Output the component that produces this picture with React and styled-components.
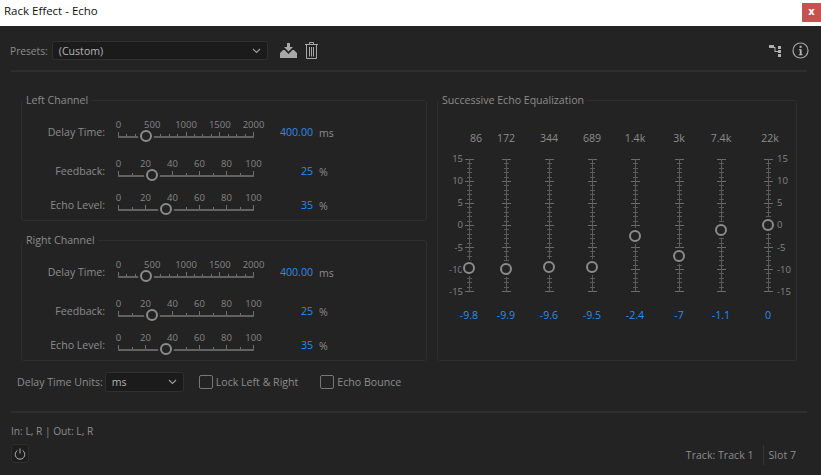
import styled, { createGlobalStyle } from "styled-components";

const GlobalStyle = createGlobalStyle`
  html, body {
    margin: 0;
    padding: 0;
    background: #232323;
  }
  * {
    box-sizing: border-box;
  }
`;

const Window = styled.div`
  width: 821px;
  height: 475px;
  overflow: hidden;
  background: #232323;
  color: #8c8c8c;
  font-family: "Open Sans", "Noto Sans", sans-serif;
  font-size: 10.6px;
`;

const TitleBar = styled.div`
  height: 26px;
  background: #fff;
  color: #111;
  font-size: 11.5px;
  display: flex;
  align-items: flex-start;
  justify-content: space-between;
  padding: 3px 0 0 4px;
`;

const CloseButton = styled.div`
  width: 19px;
  height: 19px;
  background: #c75050;
  color: #fff;
  font-family: "DejaVu Sans", sans-serif;
  font-weight: 700;
  font-size: 10px;
  line-height: 18px;
  text-align: center;
`;

const Body = styled.div`
  padding: 15px 14px 0 11px;
`;

const TopRow = styled.div`
  display: flex;
  align-items: center;
  height: 19px;
  margin: 0 -2px 0 -1px;
`;

const PresetLabel = styled.span`
  font-size: 10.2px;
`;

const Select = styled.div`
  width: ${(p) => p.$width}px;
  height: ${(p) => p.$height}px;
  margin-left: ${(p) => p.$left}px;
  background: #1b1b1b;
  border: 1px solid #303030;
  border-radius: 3px;
  color: #b4b4b4;
  display: flex;
  align-items: center;
  justify-content: space-between;
  padding: 0 6px;
`;

const IconSlot = styled.div`
  display: flex;
  margin-left: ${(p) => p.$left || 0}px;
`;

const Spacer = styled.div`
  flex: 1;
`;

const Divider = styled.div`
  height: 2px;
  background: #2e2e2e;
  margin-top: ${(p) => p.$top}px;
`;

const Main = styled.div`
  display: flex;
  gap: 10px;
  margin: 21px 0 0 10px;
`;

const LeftColumn = styled.div`
  display: flex;
  flex-direction: column;
  gap: 12px;
  width: 406px;
`;

const Group = styled.fieldset`
  margin: 0;
  padding: 12px 0 0 0;
  width: ${(p) => p.$width}px;
  height: ${(p) => p.$height}px;
  border: 1px solid #2e2e2e;
  border-radius: 3px;
  min-width: 0;
`;

const Legend = styled.legend`
  margin-left: 1px;
  padding: 0 3px;
  line-height: 14px;
  color: #8c8c8c;
`;

const ParamRow = styled.div`
  display: flex;
  align-items: flex-start;
  height: ${(p) => p.$height}px;
`;

const ParamLabel = styled.div`
  width: 83px;
  padding-top: 6px;
  line-height: 14px;
  text-align: right;
  white-space: nowrap;
`;

const Slider = styled.div`
  position: relative;
  width: 136px;
  height: 20px;
  margin-left: 13px;
`;

const SliderScale = styled.div`
  display: flex;
  justify-content: space-between;
  height: 12px;
  font-size: 9.5px;
  line-height: 12px;
  color: #858585;
`;

const ScaleMark = styled.span`
  width: 1px;
  display: flex;
  justify-content: center;
  white-space: nowrap;
`;

const Ticks = styled.svg`
  display: block;
  margin-top: 1px;
`;

const Thumb = styled.div`
  position: absolute;
  width: 12px;
  height: 12px;
  border-radius: 50%;
  background: #232323;
  border: 2.5px solid #8b8b8b;
  box-shadow: 0 0 0 2px #232323;
`;

const ParamValue = styled.div`
  width: 59px;
  padding-top: 6px;
  line-height: 14px;
  text-align: right;
  color: #2d8ceb;
`;

const ParamUnit = styled.div`
  margin-left: 6px;
  padding-top: 7px;
  line-height: 14px;
`;

const EqRow = styled.div`
  display: flex;
  align-items: flex-start;
`;

const EqScale = styled.div`
  display: flex;
  flex-direction: column;
  justify-content: space-between;
  align-items: ${(p) => (p.$right ? "flex-start" : "flex-end")};
  width: ${(p) => p.$width}px;
  height: 134px;
  margin: 39px 0 0 ${(p) => p.$left}px;
  font-size: 9.5px;
  color: #858585;
`;

const EqMark = styled.span`
  height: 1px;
  display: flex;
  align-items: center;
  white-space: nowrap;
`;

const EqColumn = styled.div`
  width: 12px;
  margin-left: ${(p) => p.$gap}px;
  display: flex;
  flex-direction: column;
  align-items: center;
`;

const EqFreq = styled.div`
  margin: 12px 0 13px ${(p) => p.$shift * 2}px;
  height: 14px;
  line-height: 14px;
  white-space: nowrap;
`;

const Fader = styled.div`
  position: relative;
  width: 12px;
  height: 134px;
`;

const FaderTicks = styled.svg`
  display: block;
`;

const EqValue = styled.div`
  margin-top: 16px;
  line-height: 14px;
  color: #2d8ceb;
  white-space: nowrap;
`;

const OptionsRow = styled.div`
  display: flex;
  align-items: center;
  height: 20px;
  margin: 11px 0 0 6px;
`;

const CheckBox = styled.div`
  width: 14px;
  height: 14px;
  border: 1px solid #777;
  border-radius: 2px;
  margin-left: ${(p) => p.$left}px;
`;

const CheckLabel = styled.span`
  margin-left: 3px;
  white-space: nowrap;
`;

const RoutingText = styled.div`
  margin-top: 11px;
  line-height: 14px;
  font-size: 10.2px;
`;

const FooterRow = styled.div`
  display: flex;
  align-items: center;
  margin-top: 4px;
`;

const PowerButton = styled.div`
  width: 18px;
  height: 19px;
  background: #1e1e1e;
  border: 1px solid #2e2e2e;
  border-radius: 3px;
  display: flex;
  align-items: center;
  justify-content: center;
`;

const TrackInfo = styled.div`
  display: flex;
  align-items: center;
  margin: 3px 11px 0 0;
`;

const SlotDivider = styled.div`
  width: 1px;
  height: 20px;
  background: #343434;
  margin: 0 5px 0 9px;
`;

const Chevron = () => (
  <svg width="9" height="6" viewBox="0 0 9 6">
    <path d="M1 1l3.5 3.5L8 1" fill="none" stroke="#9a9a9a" strokeWidth="1.2" />
  </svg>
);

const SaveIcon = () => (
  <svg width="17" height="15" viewBox="0 0 17 15">
    <path d="M7 0h3v4h3l-4.5 4.6L4 4h3z" fill="#a8a8a8" />
    <path d="M0 13.5V10l3-3h1.6l3.9 4 3.9-4H14l3 3v5H0z" fill="#a8a8a8" />
  </svg>
);

const TrashIcon = () => (
  <svg width="13" height="17" viewBox="0 0 13 17" fill="none" stroke="#a8a8a8">
    <path d="M0 2.5h13M4.5 2.5V.5h4v2M1.5 2.5v14h10v-14M4.5 5v9.5M6.5 5v9.5M8.5 5v9.5" />
  </svg>
);

const RoutingIcon = () => (
  <svg width="13" height="14" viewBox="0 0 13 14" fill="#b0b0b0">
    <rect x="0" y="1" width="5" height="3" />
    <rect x="9" y="2" width="3" height="3" />
    <rect x="9" y="6" width="3" height="3" />
    <rect x="9" y="10" width="3" height="3" />
    <path d="M5 3h1.5v4H9v1H5.5V4H5z" />
  </svg>
);

const InfoIcon = () => (
  <svg width="17" height="17" viewBox="0 0 17 17" fill="none">
    <circle cx="8.5" cy="8.5" r="7.5" stroke="#a8a8a8" strokeWidth="1.2" />
    <rect x="7.6" y="3.8" width="2" height="2" fill="#b8b8b8" />
    <path d="M6.8 7.2h2.8v5h1v1H6.8v-1h1v-4h-1z" fill="#b8b8b8" />
  </svg>
);

const PowerIcon = () => (
  <svg width="12" height="12" viewBox="0 0 12 12" fill="none" stroke="#b0b0b0">
    <path d="M6 .5v5" />
    <path d="M3.4 2.4a4.8 4.8 0 1 0 5.2 0" />
  </svg>
);

function HorizontalSlider({ marks, minor, percent }) {
  const steps = marks.length - 1;
  const ticks = [];
  for (let i = 0; i <= steps * minor; i++) {
    const x = Math.round((i * 135) / (steps * minor)) + 0.5;
    ticks.push(`M${x} ${i % minor === 0 ? 0 : 2}V5`);
  }
  return (
    <Slider>
      <SliderScale>
        {marks.map((m) => (
          <ScaleMark key={m}>{m}</ScaleMark>
        ))}
      </SliderScale>
      <Ticks width="136" height="7" viewBox="0 0 136 7" shapeRendering="crispEdges">
        <path d={ticks.join("")} stroke="#707070" />
        <rect x="0" y="4" width="136" height="2" fill="#626262" />
      </Ticks>
      <Thumb style={{ left: percent * 1.35 - 5.5, top: 11 }} />
    </Slider>
  );
}

const delayMarks = [0, 500, 1000, 1500, 2000];
const percentMarks = [0, 20, 40, 60, 80, 100];

function Channel({ title }) {
  return (
    <Group $width={406} $height={128}>
      <Legend>{title}</Legend>
      <ParamRow $height={39}>
        <ParamLabel>Delay Time:</ParamLabel>
        <HorizontalSlider marks={delayMarks} minor={4} percent={20} />
        <ParamValue>400.00</ParamValue>
        <ParamUnit>ms</ParamUnit>
      </ParamRow>
      <ParamRow $height={34}>
        <ParamLabel>Feedback:</ParamLabel>
        <HorizontalSlider marks={percentMarks} minor={2} percent={25} />
        <ParamValue>25</ParamValue>
        <ParamUnit>%</ParamUnit>
      </ParamRow>
      <ParamRow $height={24}>
        <ParamLabel>Echo Level:</ParamLabel>
        <HorizontalSlider marks={percentMarks} minor={2} percent={35} />
        <ParamValue>35</ParamValue>
        <ParamUnit>%</ParamUnit>
      </ParamRow>
    </Group>
  );
}

const bands = [
  { freq: "86", value: -9.8, gap: 0, shift: 7 },
  { freq: "172", value: -9.9, gap: 25, shift: 0 },
  { freq: "344", value: -9.6, gap: 31, shift: 0 },
  { freq: "689", value: -9.5, gap: 31, shift: 0 },
  { freq: "1.4k", value: -2.4, gap: 31, shift: 0 },
  { freq: "3k", value: -7, gap: 32, shift: 0 },
  { freq: "7.4k", value: -1.1, gap: 30, shift: 0 },
  { freq: "22k", value: 0, gap: 35, shift: 2 },
];

const dbMarks = [15, 10, 5, 0, -5, -10, -15];

function faderTicks(major) {
  const ticks = [];
  for (let i = 0; i <= 30; i++) {
    const y = Math.round(1 + i * 4.4) + 0.5;
    if (major && i % 5 === 0) ticks.push(`M2 ${y}H11`);
    if (!major && i % 5 !== 0) ticks.push(`M4 ${y}H9`);
  }
  return ticks.join("");
}

function EqBand({ band }) {
  return (
    <EqColumn $gap={band.gap}>
      <EqFreq $shift={band.shift}>{band.freq}</EqFreq>
      <Fader>
        <FaderTicks width="12" height="134" viewBox="0 0 12 134" shapeRendering="crispEdges">
          <path d={faderTicks(false)} stroke="#5a5a5a" />
          <path d={faderTicks(true)} stroke="#6c6c6c" />
          <rect x="6" y="1" width="1" height="132" fill="#5c5c5c" />
        </FaderTicks>
        <Thumb style={{ left: 0, top: 1 + (15 - band.value) * 4.4 - 6 }} />
      </Fader>
      <EqValue>{band.value}</EqValue>
    </EqColumn>
  );
}

function DbScale({ right, left, width }) {
  return (
    <EqScale $right={right} $left={left} $width={width}>
      {dbMarks.map((m) => (
        <EqMark key={m}>{m}</EqMark>
      ))}
    </EqScale>
  );
}

export default function App() {
  return (
    <Window>
      <GlobalStyle />
      <TitleBar>
        <span>Rack Effect - Echo</span>
        <CloseButton>x</CloseButton>
      </TitleBar>
      <Body>
        <TopRow>
          <PresetLabel>Presets:</PresetLabel>
          <Select $width={216} $height={19} $left={4}>
            <span>(Custom)</span>
            <Chevron />
          </Select>
          <IconSlot $left={12}>
            <SaveIcon />
          </IconSlot>
          <IconSlot $left={8}>
            <TrashIcon />
          </IconSlot>
          <Spacer />
          <IconSlot>
            <RoutingIcon />
          </IconSlot>
          <IconSlot $left={10}>
            <InfoIcon />
          </IconSlot>
        </TopRow>
        <Divider $top={10} />
        <Main>
          <LeftColumn>
            <Channel title="Left Channel" />
            <Channel title="Right Channel" />
          </LeftColumn>
          <Group $width={360} $height={268}>
            <Legend>Successive Echo Equalization</Legend>
            <EqRow>
              <DbScale left={3} width={22} />
              {bands.map((band) => (
                <EqBand key={band.freq} band={band} />
              ))}
              <DbScale right left={3} width={16} />
            </EqRow>
          </Group>
        </Main>
        <OptionsRow>
          <span>Delay Time Units:</span>
          <Select $width={79} $height={20} $left={2}>
            <span>ms</span>
            <Chevron />
          </Select>
          <CheckBox $left={15} />
          <CheckLabel>Lock Left &amp; Right</CheckLabel>
          <CheckBox $left={22} />
          <CheckLabel>Echo Bounce</CheckLabel>
        </OptionsRow>
        <Divider $top={19} />
        <RoutingText>In: L, R | Out: L, R</RoutingText>
        <FooterRow>
          <PowerButton>
            <PowerIcon />
          </PowerButton>
          <Spacer />
          <TrackInfo>
            <span>Track: Track 1</span>
            <SlotDivider />
            <span>Slot 7</span>
          </TrackInfo>
        </FooterRow>
      </Body>
    </Window>
  );
}
